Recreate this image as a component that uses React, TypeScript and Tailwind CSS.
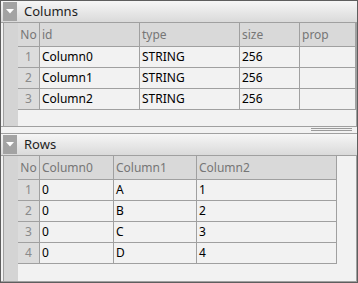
const font = { fontFamily: '"Noto Sans", "Open Sans", sans-serif' };

type Col = { name: string; w: string };

function TitleBar({ title }: { title: string }) {
  return (
    <div className="flex h-[22px] shrink-0 items-stretch border-b border-[#a0a0a0] bg-gradient-to-b from-[#f6f6f6] to-[#dadada] pl-[2px]">
      <div className="my-[1px] flex w-[14px] items-center justify-center bg-[#a3a3a3]">
        <svg width="8" height="5" viewBox="0 0 8 5">
          <polygon points="0,0 8,0 4,4.5" fill="#ffffff" />
        </svg>
      </div>
      <div className="flex items-center pl-[7px] text-[13px] text-[#1e1e1e]">{title}</div>
    </div>
  );
}

function Table({ cols, rows }: { cols: Col[]; rows: string[][] }) {
  return (
    <div className="flex min-h-0 flex-1 border-l border-r border-[#a0a0a0] ml-[2px]">
      <div className="w-[14px] shrink-0 bg-[#d4d4d4]" />
      <div className="flex flex-col">
        <div className="flex h-[24px]">
          <div className="flex w-[22px] items-center justify-center border-r border-b border-[#a0a0a0] bg-[#d9d9d9] text-[12px] text-[#767676]">
            No
          </div>
          {cols.map((c) => (
            <div
              key={c.name}
              className={`flex items-center border-r border-b border-[#a0a0a0] bg-[#d9d9d9] pl-[2px] text-[12px] text-[#767676] ${c.w}`}
            >
              {c.name}
            </div>
          ))}
        </div>
        {rows.map((r, i) => (
          <div key={i} className="flex h-[21px]">
            <div className="flex w-[22px] items-center justify-center border-r border-b border-[#a0a0a0] bg-[#dcdcdc] text-[12px] text-[#8a8a8a]">
              {i + 1}
            </div>
            {cols.map((c, j) => (
              <div
                key={c.name}
                className={`flex items-center border-r border-b border-[#a0a0a0] pl-[2px] text-[12px] text-black ${c.w}`}
              >
                {r[j]}
              </div>
            ))}
          </div>
        ))}
      </div>
    </div>
  );
}

export default function App() {
  const colCols: Col[] = [
    { name: "id", w: "w-[100px]" },
    { name: "type", w: "w-[100px]" },
    { name: "size", w: "w-[60px]" },
    { name: "prop", w: "w-[56px]" },
  ];
  const colRows = [
    ["Column0", "STRING", "256", ""],
    ["Column1", "STRING", "256", ""],
    ["Column2", "STRING", "256", ""],
  ];
  const rowCols: Col[] = [
    { name: "Column0", w: "w-[74px]" },
    { name: "Column1", w: "w-[83px]" },
    { name: "Column2", w: "w-[140px]" },
  ];
  const rowRows = [
    ["0", "A", "1"],
    ["0", "B", "2"],
    ["0", "C", "3"],
    ["0", "D", "4"],
  ];

  return (
    <div
      className="flex h-[283px] w-[358px] flex-col border border-[#5e5e5e] bg-[#f2f2f2] pr-0"
      style={font}
    >
      <div className="flex h-[125px] shrink-0 flex-col">
        <TitleBar title="Columns" />
        <Table cols={colCols} rows={colRows} />
      </div>
      <div className="flex h-[8px] shrink-0 flex-col items-end border-t border-b border-[#a0a0a0] bg-[#f2f2f2] pt-[1px] pr-[5px]">
        <div className="h-[1px] w-[41px] bg-[#9a9a9a]" />
        <div className="mt-[1px] h-[1px] w-[41px] bg-[#9a9a9a]" />
      </div>
      <div className="flex min-h-0 flex-1 flex-col">
        <TitleBar title="Rows" />
        <div className="flex min-h-0 flex-1 border-b border-[#a0a0a0]">
          <Table cols={rowCols} rows={rowRows} />
        </div>
      </div>
    </div>
  );
}
